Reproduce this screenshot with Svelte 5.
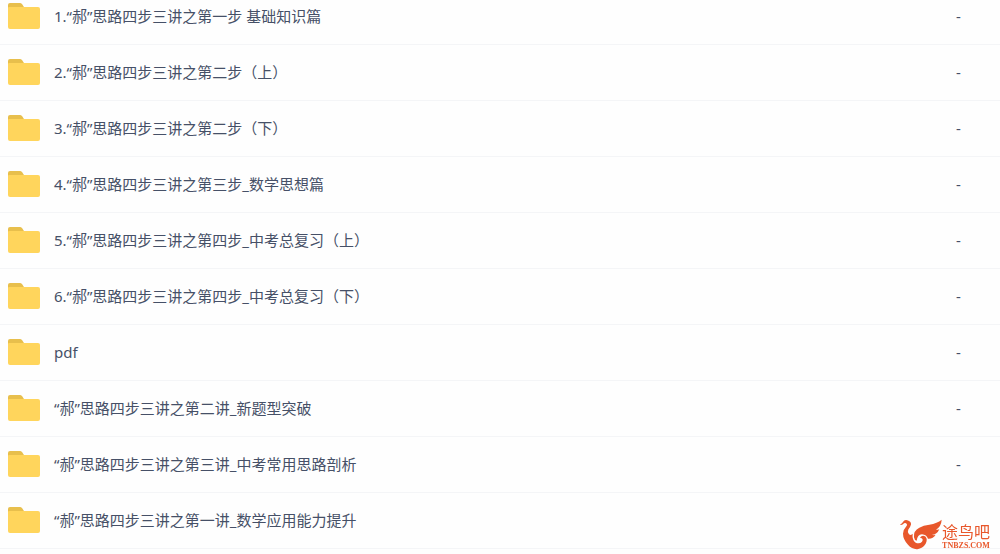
<script lang="ts">
	type Entry = { name: string; size: string };

	const entries: Entry[] = [
		{ name: '1.“郝”思路四步三讲之第一步 基础知识篇', size: '-' },
		{ name: '2.“郝”思路四步三讲之第二步（上）', size: '-' },
		{ name: '3.“郝”思路四步三讲之第二步（下）', size: '-' },
		{ name: '4.“郝”思路四步三讲之第三步_数学思想篇', size: '-' },
		{ name: '5.“郝”思路四步三讲之第四步_中考总复习（上）', size: '-' },
		{ name: '6.“郝”思路四步三讲之第四步_中考总复习（下）', size: '-' },
		{ name: 'pdf', size: '-' },
		{ name: '“郝”思路四步三讲之第二讲_新题型突破', size: '-' },
		{ name: '“郝”思路四步三讲之第三讲_中考常用思路剖析', size: '-' },
		{ name: '“郝”思路四步三讲之第一讲_数学应用能力提升', size: '' }
	];
</script>

<main class="file-list">
	<table>
		<tbody>
			{#each entries as entry (entry.name)}
				<tr>
					<td class="name">
						<a href="#folder">
							<svg class="folder" viewBox="0 0 32 26" aria-hidden="true">
								<path d="M0 2Q0 0 2 0H12Q13 0 14 1L16 4V10H0Z" fill="#e8bf4c" />
								<path d="M0 5Q0 4 1 4H30Q32 4 32 6V24Q32 26 30 26H2Q0 26 0 24Z" fill="#ffd55c" />
							</svg>
							<span>{entry.name}</span>
						</a>
					</td>
					<td class="size">{entry.size}</td>
				</tr>
			{/each}
		</tbody>
	</table>
</main>

<div class="watermark">
	<svg class="bird" viewBox="0 0 126 92" aria-hidden="true">
		<!-- head, neck and body -->
		<path
			d="M0 17Q7 13 10 7Q16 0 24 4Q34 7 33 16Q31 24 25 31Q21 39 27 45Q33 50 38 44Q36 62 46 70Q58 76 66 68Q72 58 60 56Q66 46 76 52Q84 60 77 74Q68 89 52 90Q36 91 24 77Q9 61 9 44Q9 32 18 23Q24 16 18 12Q13 10 9 15Q5 18 0 17Z"
			fill="#e8572b"
		/>
		<!-- wing -->
		<path
			d="M42 54Q40 35 58 26Q70 19 88 17Q112 13 125 2Q124 22 108 32Q114 32 118 30Q111 46 96 47Q102 49 107 47Q99 60 84 59Q80 46 66 45Q52 46 50 65Q43 62 42 54Z"
			fill="#e8572b"
		/>
	</svg>
	<div class="brand">
		<span class="brand-name">途鸟吧</span>
		<span class="brand-url">TNBZS.COM</span>
	</div>
</div>

<style>
	:global(body) {
		background: #fefefe;
		overflow: hidden;
	}

	.file-list {
		/* the list is scrolled a little past its first row's top edge */
		margin-top: -12px;
		font-family: 'Noto Sans', 'Noto Sans CJK SC', sans-serif;
		font-size: 15px;
		line-height: 20px;
		color: #465067;
	}

	table {
		width: 100%;
		table-layout: fixed;
		border-collapse: collapse;
	}

	td {
		box-sizing: border-box;
		height: 56px;
		padding: 0;
		border-bottom: 1px solid #f4f5f7;
	}

	.name {
		padding-left: 8px;
	}

	.name a {
		display: flex;
		align-items: center;
		gap: 14px;
		color: inherit;
		text-decoration: none;
		white-space: nowrap;
	}

	.folder {
		flex: none;
		width: 32px;
		height: 26px;
	}

	.size {
		width: 44px;
	}

	.watermark {
		position: fixed;
		right: 10px;
		bottom: 4px;
		display: flex;
		align-items: flex-end;
		color: #e8572b;
	}

	.bird {
		width: 42px;
		height: 31px;
	}

	.brand {
		display: flex;
		flex-direction: column;
		align-items: center;
	}

	.brand-name {
		font: 16px/18px 'Liberation Sans', 'Noto Sans CJK SC', sans-serif;
	}

	.brand-url {
		font: bold 8px/8px 'Liberation Serif', serif;
	}
</style>
